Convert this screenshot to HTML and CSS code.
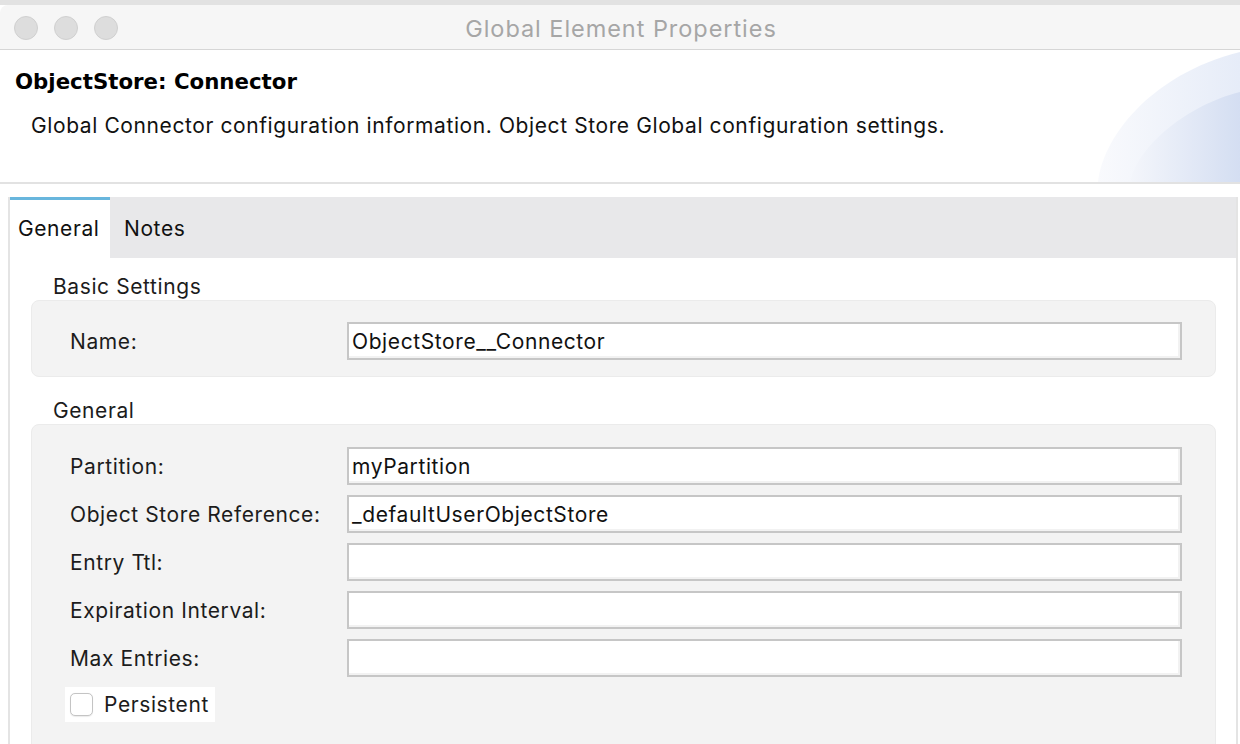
FILE: index.html
```html
<!DOCTYPE html>
<html>
<head>
<meta charset="utf-8">
<link rel="stylesheet" href="styles.css">
</head>
<body>
<div class="backstrip"></div>
<div class="window">
  <div class="titlebar">
    <div class="lights">
      <span class="light"></span><span class="light"></span><span class="light"></span>
    </div>
    <div class="title">Global Element Properties</div>
  </div>
  <div class="header">
    <h1 class="heading">ObjectStore: Connector</h1>
    <p class="desc">Global Connector configuration information. Object Store Global configuration settings.</p>
    <svg class="deco" width="142" height="132" viewBox="0 0 142 132" aria-hidden="true">
      <defs>
        <linearGradient id="g1" x1="0" y1="0" x2="1" y2="0">
          <stop offset="0" stop-color="#f9fafd"/>
          <stop offset="1" stop-color="#e6ecf8"/>
        </linearGradient>
        <linearGradient id="g2" x1="0" y1="0" x2="1" y2="0">
          <stop offset="0" stop-color="#f4f6fb"/>
          <stop offset="1" stop-color="#d4def2"/>
        </linearGradient>
      </defs>
      <path d="M0 132 C 4 90 50 25 142 2 L142 132 Z" fill="url(#g1)"/>
      <path d="M32 132 C 40 95 90 55 142 42 L142 132 Z" fill="url(#g2)"/>
    </svg>
  </div>
  <div class="sep"></div>
  <div class="folder">
    <div class="tabs">
      <div class="tab active">General</div>
      <div class="tab">Notes</div>
    </div>
    <div class="content">
      <div class="group-title">Basic Settings</div>
      <div class="group">
        <div class="row">
          <label class="lbl">Name:</label>
          <div class="field">ObjectStore__Connector</div>
        </div>
      </div>
      <div class="group-title second">General</div>
      <div class="group tall">
        <div class="row">
          <label class="lbl">Partition:</label>
          <div class="field">myPartition</div>
        </div>
        <div class="row">
          <label class="lbl">Object Store Reference:</label>
          <div class="field">_defaultUserObjectStore</div>
        </div>
        <div class="row">
          <label class="lbl">Entry Ttl:</label>
          <div class="field"></div>
        </div>
        <div class="row">
          <label class="lbl">Expiration Interval:</label>
          <div class="field"></div>
        </div>
        <div class="row">
          <label class="lbl">Max Entries:</label>
          <div class="field"></div>
        </div>
        <div class="check">
          <span class="box"></span>
          <span class="check-label">Persistent</span>
        </div>
      </div>
    </div>
  </div>
</div>
</body>
</html>
```
FILE: styles.css
```css
html, body {
  margin: 0;
  padding: 0;
  background: #ffffff;
  overflow: hidden;
}
body {
  width: 1240px;
  height: 744px;
  font-family: Inter, "Liberation Sans", sans-serif;
  color: #1c1c1c;
}
.backstrip {
  height: 5px;
  background: #e2e2e2;
}
.window {
  background: #ffffff;
  height: 739px;
  overflow: hidden;
}
.titlebar {
  position: relative;
  height: 44px;
  background: #f6f6f6;
  border-top-left-radius: 8px;
  border-bottom: 1px solid #d6d6d6;
  display: flex;
  align-items: center;
}
.lights {
  display: flex;
  gap: 16px;
  padding-left: 14px;
  padding-top: 2px;
}
.light {
  width: 22px;
  height: 22px;
  border-radius: 50%;
  background: #dddddd;
  border: 1px solid #d0d0d0;
}
.title {
  position: absolute;
  left: 0;
  right: 0;
  top: 2px;
  bottom: 0;
  display: flex;
  align-items: center;
  justify-content: center;
  font-size: 23.5px;
  letter-spacing: 0.95px;
  color: #a6a6a6;
  padding-left: 2px;
}
.header {
  position: relative;
  height: 132px;
  overflow: hidden;
}
.heading {
  margin: 0;
  padding: 18px 0 0 15px;
  font-family: "DejaVu Sans", sans-serif;
  font-weight: bold;
  font-size: 21.3px;
  color: #000000;
  line-height: 28px;
}
.desc {
  margin: 0;
  padding: 16px 0 0 31px;
  font-size: 21px;
  letter-spacing: 0.6px;
  line-height: 28px;
  color: #111111;
}
.deco {
  position: absolute;
  right: 0;
  top: 0;
}
.sep {
  height: 2px;
  background: #e2e2e2;
  margin-bottom: 13px;
}
.folder {
  margin-left: 8px;
  margin-right: 2px;
  border-left: 2px solid #e4e4e4;
  border-right: 2px solid #e4e4e4;
  height: 560px;
}
.tabs {
  display: flex;
  background: #e8e8ea;
  height: 61px;
}
.tab {
  font-size: 21px;
  letter-spacing: 0.6px;
  padding: 0 8px 0 8px;
  line-height: 58px;
  padding-top: 3px;
  color: #111111;
}
.tab.active {
  background: #ffffff;
  border-top: 3px solid #68b6dd;
  padding-top: 0;
  width: 84px;
  padding-right: 8px;
  white-space: nowrap;
}
.tab + .tab {
  padding-left: 14px;
}
.content {
  padding: 16px 20px 0 21px;
}
.group-title {
  font-size: 21px;
  letter-spacing: 0.6px;
  padding-left: 22px;
  line-height: 26px;
  height: 26px;
  color: #1c1c1c;
}
.group-title.second {
  margin-top: 21px;
}
.group {
  background: #f3f3f3;
  border: 1px solid #ebebeb;
  border-radius: 8px;
  padding: 21px 33px 16px 38px;
  display: flex;
  flex-direction: column;
  gap: 10px;
}
.group.tall {
  padding-top: 22px;
  height: 400px;
}
.row {
  display: grid;
  grid-template-columns: 277px 1fr;
  align-items: center;
}
.lbl {
  font-size: 21px;
  letter-spacing: 0.6px;
  color: #1c1c1c;
}
.field {
  height: 34px;
  border: 2px solid #c6c6c6;
  background: #ffffff;
  font-size: 21px;
  letter-spacing: 0.6px;
  line-height: 36px;
  padding-left: 3px;
  color: #111111;
  overflow: hidden;
  box-shadow: inset -2px -2px 0 #f2f2f2;
}
.check {
  display: flex;
  align-items: center;
  gap: 11px;
  background: #ffffff;
  align-self: flex-start;
  height: 35px;
  margin-left: -5px;
  padding-left: 5px;
  padding-right: 6px;
}
.box {
  width: 21px;
  height: 21px;
  border: 1px solid #c4c4c4;
  border-radius: 5px;
  background: #ffffff;
  box-shadow: 0 0.5px 1px rgba(0,0,0,0.08);
}
.check-label {
  font-size: 21px;
  letter-spacing: 0.6px;
  color: #1c1c1c;
}
```
